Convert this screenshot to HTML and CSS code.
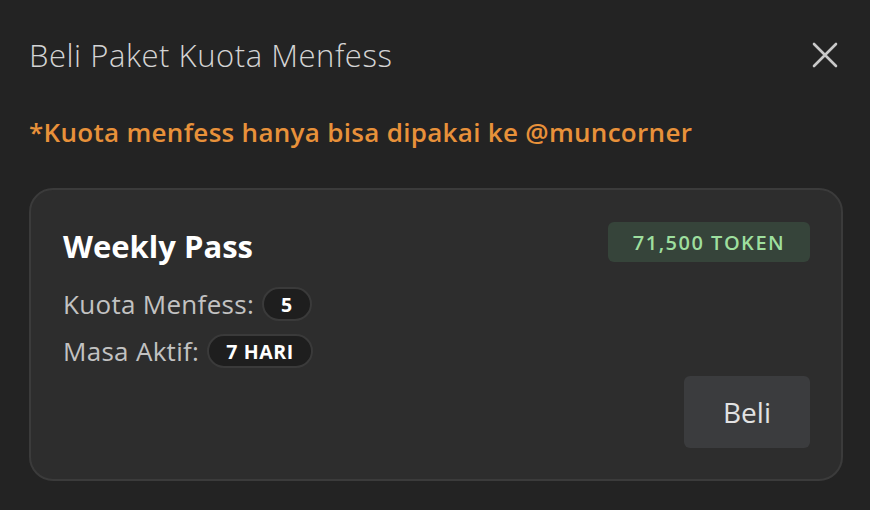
FILE: index.html
```html
<!DOCTYPE html>
<html lang="id">
<head>
<meta charset="utf-8">
<title>Beli Paket Kuota Menfess</title>
<link rel="stylesheet" href="styles.css">
</head>
<body>
<div class="modal">
  <header class="modal-header">
    <h1 class="modal-title">Beli Paket Kuota Menfess</h1>
    <button class="close-btn" aria-label="Tutup">
      <svg width="26" height="26" viewBox="0 0 26 26"><path d="M2 2 L24 24 M24 2 L2 24" stroke="#c9c9c9" stroke-width="2.6" stroke-linecap="round" fill="none"/></svg>
    </button>
  </header>
  <p class="notice">*Kuota menfess hanya bisa dipakai ke @muncorner</p>
  <div class="card">
    <div class="card-top">
      <h2 class="card-title">Weekly Pass</h2>
      <span class="price">71,500 TOKEN</span>
    </div>
    <div class="info-row first">Kuota Menfess: <span class="pill">5</span></div>
    <div class="info-row">Masa Aktif: <span class="pill">7 HARI</span></div>
    <div class="card-actions">
      <button class="buy-btn">Beli</button>
    </div>
  </div>
</div>
</body>
</html>
```

FILE: styles.css
```css
* { box-sizing: border-box; }
html, body { margin: 0; padding: 0; }
body {
  background: #232323;
  width: 870px;
  height: 510px;
  overflow: hidden;
  font-family: "Open Sans", "Noto Sans", sans-serif;
}
.modal {
  padding: 33px 27px 0 29px;
}
.modal-header {
  display: flex;
  align-items: center;
  justify-content: space-between;
  height: 44px;
}
.modal-title {
  margin: 0;
  font-weight: 300;
  font-size: 31px;
  color: #d4d4d4;
  letter-spacing: 0.55px;
}
.close-btn {
  background: none;
  border: 0;
  padding: 0;
  width: 26px;
  height: 26px;
  display: flex;
  margin-right: 5px;
}
.notice {
  margin: 38px 0 0;
  font-weight: 600;
  font-size: 26px;
  color: #e8913a;
  line-height: 34px;
  letter-spacing: 0.3px;
}
.card {
  margin-top: 39px;
  width: 814px;
  height: 293px;
  background: #2d2d2d;
  border: 2px solid #3b3b3b;
  border-radius: 24px;
  padding: 32px 31px 31px 32px;
  display: flex;
  flex-direction: column;
}
.card-top {
  display: flex;
  justify-content: space-between;
  align-items: flex-start;
}
.card-title {
  margin: 3px 0 0;
  font-size: 31px;
  font-weight: 700;
  color: #ffffff;
  line-height: 42px;
}
.price {
  background: #36443a;
  color: #9edf9e;
  font-weight: 600;
  font-size: 20px;
  letter-spacing: 1.5px;
  border-radius: 6px;
  height: 40px;
  width: 202px;
  display: flex;
  align-items: center;
  justify-content: center;
}
.info-row {
  font-size: 26px;
  color: #c2c2c2;
  letter-spacing: 0.3px;
  display: flex;
  align-items: center;
  gap: 8px;
  height: 34px;
  margin-top: 13px;
}
.info-row.first { margin-top: 20px; }
.pill {
  background: #1e1e1e;
  border: 2px solid #3a3a3a;
  border-radius: 17px;
  height: 34px;
  padding: 0 17px;
  display: inline-flex;
  align-items: center;
  color: #ffffff;
  font-weight: 700;
  font-size: 19.5px;
  letter-spacing: 0.6px;
}
.card-actions {
  margin-top: auto;
  display: flex;
  justify-content: flex-end;
}
.buy-btn {
  background: #3b3c3e;
  border: 0;
  border-radius: 6px;
  width: 126px;
  height: 72px;
  color: #e2e2e2;
  font-family: "Open Sans", sans-serif;
  font-size: 28px;
}
```
